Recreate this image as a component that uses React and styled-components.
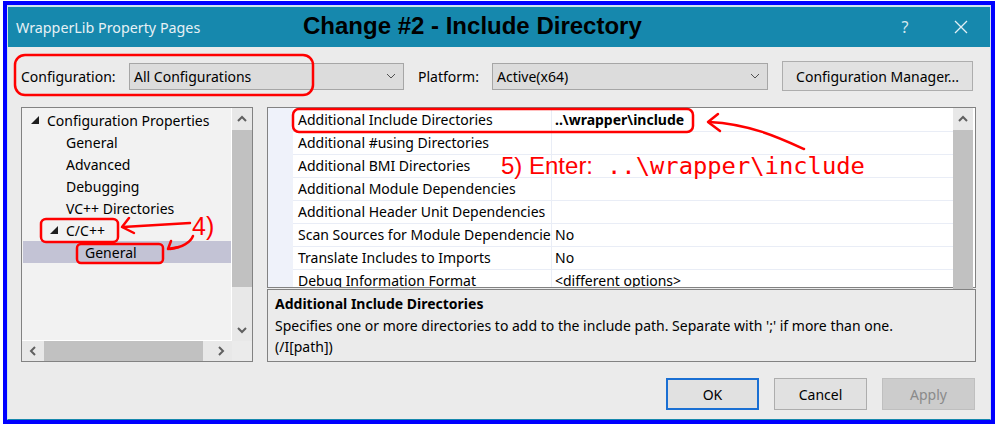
import React from "react";
import styled, { createGlobalStyle } from "styled-components";

const GlobalStyle = createGlobalStyle`
  html, body {
    margin: 0;
    padding: 0;
    background: #ffffff;
  }
  body {
    font-family: "Noto Sans", "Open Sans", sans-serif;
    font-size: 14px;
    color: #000000;
  }
`;

const Frame = styled.div`
  position: relative;
  box-sizing: border-box;
  width: 992px;
  height: 423px;
  margin: 1px 0 0 3px;
  border: 4px solid #0000ff;
`;

const Window = styled.div`
  box-sizing: border-box;
  height: 100%;
  display: flex;
  flex-direction: column;
  border: 1px solid #cfe2ea;
  border-top-width: 2px;
  border-bottom-color: #1688ad;
  background: #ebebeb;
`;

const TitleBar = styled.div`
  height: 40px;
  flex: none;
  display: flex;
  align-items: center;
  padding-left: 8px;
  background: #1688ad;
  color: #e6f1f5;
`;

const Title = styled.div`
  font-size: 14.3px;
`;

const TitleButton = styled.div`
  width: 56px;
  height: 40px;
  display: flex;
  align-items: center;
  justify-content: center;
  font-size: 16px;
  color: #d4e8ef;
  margin-left: ${(p) => (p.first ? "auto" : "0")};
  margin-right: ${(p) => (p.last ? "1px" : "0")};
`;

const Body = styled.div`
  flex: 1;
  display: flex;
  flex-direction: column;
  padding: 14px 14px 0 13px;
`;

const Toolbar = styled.div`
  height: 30px;
  display: flex;
  align-items: center;
`;

const Label = styled.div`
  width: ${(p) => p.width}px;
  flex: none;
`;

const Select = styled.div`
  box-sizing: border-box;
  width: ${(p) => p.width}px;
  height: 27px;
  flex: none;
  display: flex;
  align-items: center;
  justify-content: space-between;
  padding: 0 7px 0 4px;
  background: #dcdcdc;
  border: 1px solid #a6a6a6;
  margin-right: 14px;
`;

const Button = styled.div`
  box-sizing: border-box;
  width: ${(p) => p.width || 93}px;
  height: ${(p) => p.height || 32}px;
  flex: none;
  display: flex;
  align-items: center;
  justify-content: center;
  background: ${(p) => (p.disabled ? "#cccccc" : "#e1e1e1")};
  border: ${(p) =>
    p.primary ? "2px solid #1a6fd3" : p.disabled ? "1px solid #bfbfbf" : "1px solid #adadad"};
  color: ${(p) => (p.disabled ? "#8a8a8a" : "#000000")};
`;

const Main = styled.div`
  margin-top: 16px;
  height: 255px;
  display: flex;
  gap: 14px;
`;

const TreeBox = styled.div`
  box-sizing: border-box;
  width: 232px;
  flex: none;
  border: 1px solid #828282;
  display: grid;
  grid-template-columns: 210px 20px;
  grid-template-rows: 233px 20px;
  background: #ebebeb;
`;

const TreeContent = styled.div`
  box-sizing: border-box;
  background: #f2f2f2;
  border-right: 1px solid #ffffff;
  border-bottom: 1px solid #ffffff;
  padding: 1px 0 0 1px;
`;

const TreeRow = styled.div`
  height: 22px;
  display: flex;
  align-items: center;
  padding-left: ${(p) => 8 + p.level * 19}px;
  background: ${(p) => (p.selected ? "#c3c3d5" : "transparent")};
  white-space: nowrap;
`;

const Expander = styled.span`
  width: 16px;
  flex: none;
  display: flex;
  align-items: center;
`;

const VScroll = styled.div`
  display: flex;
  flex-direction: column;
  background: #e8e8e8;
`;

const HScroll = styled.div`
  display: flex;
  background: #e8e8e8;
`;

const ArrowBox = styled.div`
  flex: none;
  width: ${(p) => (p.horizontal ? "22px" : "auto")};
  height: ${(p) => (p.horizontal ? "auto" : "22px")};
  display: flex;
  align-items: center;
  justify-content: center;
`;

const Thumb = styled.div`
  flex: none;
  background: #c1c1c1;
  width: ${(p) => (p.horizontal ? `${p.size}px` : "auto")};
  height: ${(p) => (p.horizontal ? "auto" : `${p.size}px`)};
`;

const Spacer = styled.div`
  flex: 1;
`;

const RightPane = styled.div`
  flex: 1;
  display: flex;
  flex-direction: column;
  gap: 1px;
`;

const GridBox = styled.div`
  box-sizing: border-box;
  height: 181px;
  flex: none;
  display: flex;
  border: 1px solid #828282;
  background: #ffffff;
  padding-right: 2px;
`;

const Gutter = styled.div`
  width: 25px;
  flex: none;
  background: #eff2fa;
`;

const Rows = styled.div`
  flex: 1;
  overflow: hidden;
  padding-top: 1px;
`;

const PropRow = styled.div`
  height: 22px;
  display: grid;
  grid-template-columns: 259px 1fr;
  border-bottom: 1px solid #e9edf6;
`;

const Cell = styled.div`
  line-height: 22px;
  padding-left: ${(p) => (p.value ? 3 : 5)}px;
  overflow: hidden;
  white-space: nowrap;
  font-weight: ${(p) => (p.bold ? 700 : 400)};
  border-right: ${(p) => (p.value ? "none" : "1px solid #e9edf6")};
`;

const GridScroll = styled(VScroll)`
  width: 20px;
  flex: none;
`;

const Description = styled.div`
  box-sizing: border-box;
  flex: 1;
  border: 1px solid #828282;
  padding: 3px 7px;
  line-height: 21px;
`;

const DescTitle = styled.div`
  font-weight: 700;
  margin-bottom: 1px;
`;

const Footer = styled.div`
  margin-top: 16px;
  padding-right: 1px;
  display: flex;
  justify-content: flex-end;
  gap: 15px;
`;

const Overlay = styled.svg`
  position: absolute;
  left: -7px;
  top: -5px;
  width: 996px;
  height: 428px;
  pointer-events: none;
`;

const Chevron = ({ dir }) => {
  const pts = {
    up: "1,6 5,2 9,6",
    down: "1,2 5,6 9,2",
    left: "6,1 2,5 6,9",
    right: "2,1 6,5 2,9",
  }[dir];
  const wide = dir === "up" || dir === "down";
  return (
    <svg width={wide ? 10 : 8} height={wide ? 8 : 10} viewBox={wide ? "0 0 10 8" : "0 0 8 10"}>
      <polyline points={pts} fill="none" stroke="#606060" strokeWidth="2" />
    </svg>
  );
};

const DropArrow = () => (
  <svg width="10" height="6" viewBox="0 0 10 6">
    <polyline points="1,1 5,5 9,1" fill="none" stroke="#505050" strokeWidth="1" />
  </svg>
);

const Triangle = () => (
  <svg width="8" height="8" viewBox="0 0 8 8">
    <polygon points="8,0 8,8 0,8" fill="#1e1e1e" />
  </svg>
);

const treeItems = [
  { label: "Configuration Properties", level: 0, open: true },
  { label: "General", level: 1 },
  { label: "Advanced", level: 1 },
  { label: "Debugging", level: 1 },
  { label: "VC++ Directories", level: 1 },
  { label: "C/C++", level: 1, open: true },
  { label: "General", level: 2, selected: true },
];

const props = [
  ["Additional Include Directories", "..\\wrapper\\include", true],
  ["Additional #using Directories", ""],
  ["Additional BMI Directories", ""],
  ["Additional Module Dependencies", ""],
  ["Additional Header Unit Dependencies", ""],
  ["Scan Sources for Module Dependencies", "No"],
  ["Translate Includes to Imports", "No"],
  ["Debug Information Format", "<different options>"],
];

const red = "#ff0000";

const Annotations = () => (
  <Overlay viewBox="0 0 996 428">
    <text x="303" y="34" fontFamily="Liberation Sans, Arial, sans-serif" fontWeight="700" fontSize="24" fill="#000">
      Change #2 - Include Directory
    </text>
    <g fill="none" stroke={red} strokeWidth="2.5" strokeLinecap="round" strokeLinejoin="round">
      <rect x="15" y="55" width="298" height="40" rx="10" />
      <rect x="41" y="219" width="77" height="23" rx="5" />
      <rect x="77" y="244" width="86" height="19" rx="4" />
      <rect x="293" y="109" width="400" height="23" rx="6" />
      <path d="M190,223 L123,227" />
      <path d="M129,218 L122,227 L134,233" />
      <path d="M193,236 Q189,246 170,249" />
      <path d="M171,241 L168,249 L179,247" />
      <path d="M804,149 C780,138 750,124 709,122" />
      <path d="M718,114 L708,122 L720,131" />
    </g>
    <text x="192" y="235" fontFamily="Liberation Sans, Arial, sans-serif" fontSize="25" fill={red}>
      4)
    </text>
    <text x="501" y="174" fontFamily="Liberation Sans, Arial, sans-serif" fontSize="24" fill={red}>
      5) Enter:
    </text>
    <text x="607" y="174" fontFamily="DejaVu Sans Mono, monospace" fontSize="23.8" fill={red}>
      ..\wrapper\include
    </text>
  </Overlay>
);

const X = () => (
  <svg width="14" height="14" viewBox="0 0 14 14">
    <path d="M1,1 L13,13 M13,1 L1,13" stroke="#e2f0f5" strokeWidth="1.3" />
  </svg>
);

export default function App() {
  return (
    <>
      <GlobalStyle />
      <Frame>
        <Window>
          <TitleBar>
            <Title>WrapperLib Property Pages</Title>
            <TitleButton first>?</TitleButton>
            <TitleButton last>
              <X />
            </TitleButton>
          </TitleBar>
          <Body>
            <Toolbar>
              <Label width={108}>Configuration:</Label>
              <Select width={275}>
                All Configurations
                <DropArrow />
              </Select>
              <Label width={74}>Platform:</Label>
              <Select width={276}>
                Active(x64)
                <DropArrow />
              </Select>
              <Button width={191} height={30}>
                Configuration Manager...
              </Button>
            </Toolbar>
            <Main>
              <TreeBox>
                <TreeContent>
                  {treeItems.map((t, i) => (
                    <TreeRow key={i} level={t.level} selected={t.selected}>
                      <Expander>{t.open && <Triangle />}</Expander>
                      {t.label}
                    </TreeRow>
                  ))}
                </TreeContent>
                <VScroll>
                  <ArrowBox>
                    <Chevron dir="up" />
                  </ArrowBox>
                  <Thumb size={157} />
                  <Spacer />
                  <ArrowBox>
                    <Chevron dir="down" />
                  </ArrowBox>
                </VScroll>
                <HScroll>
                  <ArrowBox horizontal>
                    <Chevron dir="left" />
                  </ArrowBox>
                  <Thumb horizontal size={159} />
                  <Spacer />
                  <ArrowBox horizontal>
                    <Chevron dir="right" />
                  </ArrowBox>
                </HScroll>
                <div />
              </TreeBox>
              <RightPane>
                <GridBox>
                  <Gutter />
                  <Rows>
                    {props.map(([name, value, bold], i) => (
                      <PropRow key={i}>
                        <Cell>{name}</Cell>
                        <Cell value bold={bold}>
                          {value}
                        </Cell>
                      </PropRow>
                    ))}
                  </Rows>
                  <GridScroll>
                    <ArrowBox>
                      <Chevron dir="up" />
                    </ArrowBox>
                    <Thumb size={160} />
                  </GridScroll>
                </GridBox>
                <Description>
                  <DescTitle>Additional Include Directories</DescTitle>
                  Specifies one or more directories to add to the include path. Separate with ';' if more than one.
                  <br />
                  (/I[path])
                </Description>
              </RightPane>
            </Main>
            <Footer>
              <Button primary>OK</Button>
              <Button>Cancel</Button>
              <Button disabled>Apply</Button>
            </Footer>
          </Body>
        </Window>
        <Annotations />
      </Frame>
    </>
  );
}
